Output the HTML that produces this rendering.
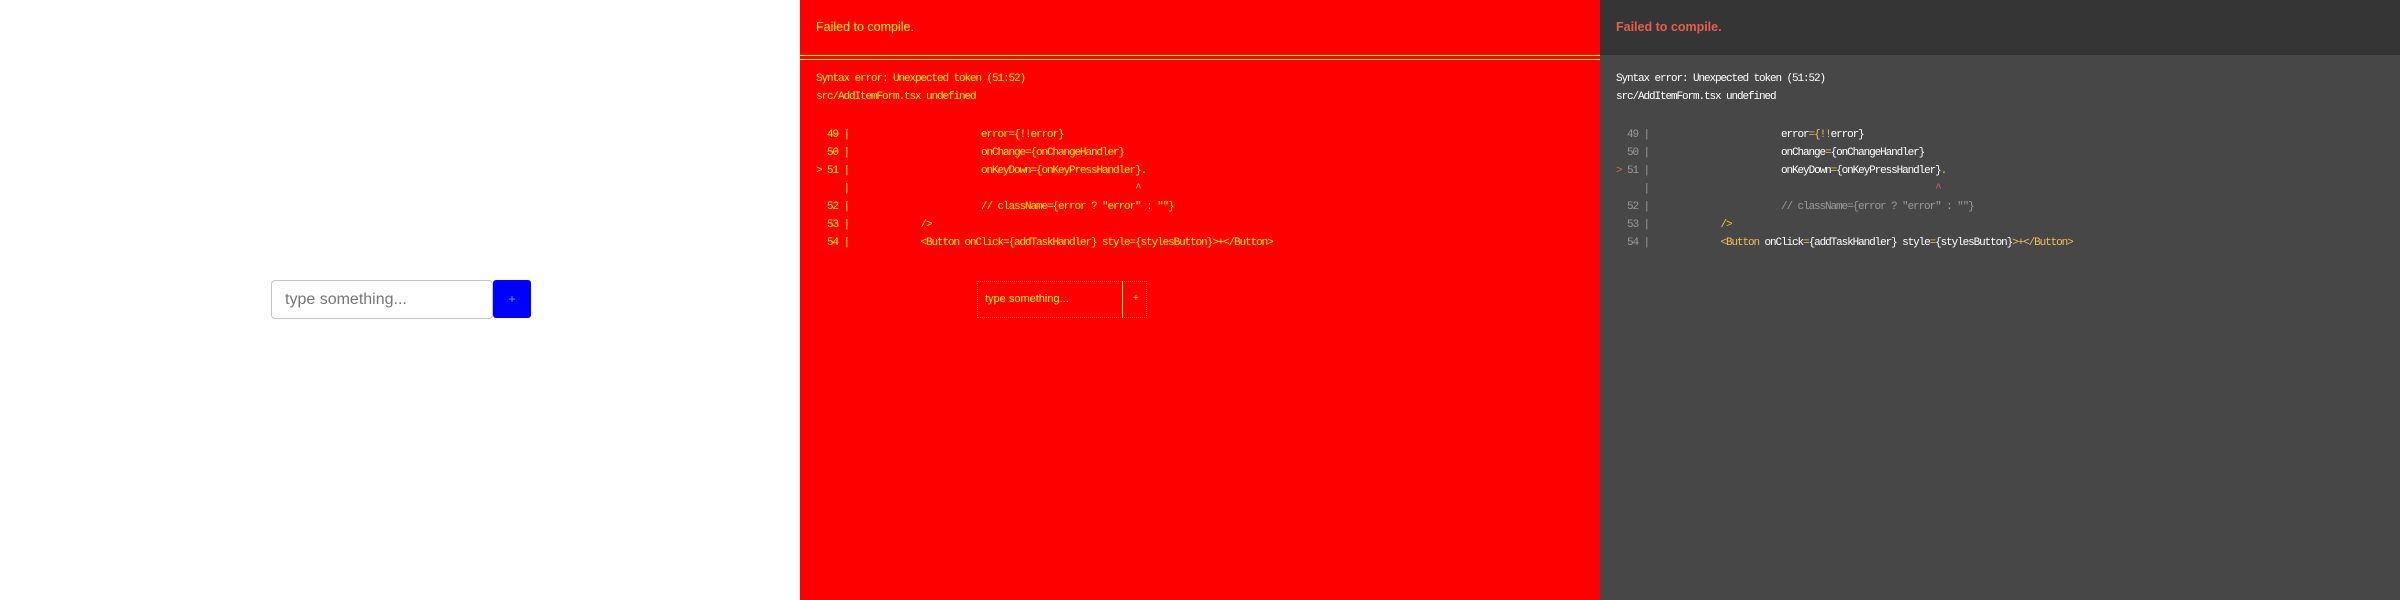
<!DOCTYPE html>
<html><head><meta charset="utf-8"><style>
*{margin:0;padding:0;box-sizing:border-box}
body{width:2400px;height:600px;overflow:hidden;position:relative;background:#fff;font-family:"Liberation Sans",sans-serif}
.p{position:absolute;top:0;width:800px;height:600px}
#l{left:0;background:#fff}
#r{left:800px;background:#ff0000}
#d{left:1600px;background:#474747}
.hd{position:absolute;left:0;top:0;width:800px;height:55px}
#d .hd{background:#353535}
.title{position:absolute;left:16px;top:20px;font-size:12.5px;font-weight:bold;font-family:"Liberation Sans Narrow","Liberation Sans",sans-serif}
.code{position:absolute;left:16px;font-family:"Liberation Mono",monospace;font-size:11px;letter-spacing:-1.1px;white-space:pre;line-height:18px}
.y{color:#f0c050}.g{color:#9a9a9a}.rd{color:#e36049}
#r .code,#r .title{color:#ffff00}
</style></head><body>
<div class="p" id="l">
  <div style="position:absolute;left:271px;top:280px;width:222px;height:39px;border:1px solid #c4c4c4;border-radius:4px;font-size:16px;color:#757575;padding:10px 0 0 13px">type something...</div>
  <div style="position:absolute;left:493px;top:280px;width:38px;height:38px;background:#0000ff;border-radius:3px;color:#7aa7ff;font-size:12px;text-align:center;line-height:38px">+</div>
</div>
<div class="p" id="r">
  <div class="title" style="font-weight:normal">Failed to compile.</div>
  <div style="position:absolute;left:0;top:55px;width:800px;height:1px;background:#ff0"></div>
  <div style="position:absolute;left:0;top:59px;width:800px;height:1px;background:#ff0"></div>
  <div class="code" style="top:70px">Syntax error: Unexpected token (51:52)
src/AddItemForm.tsx undefined</div>
  <div class="code" style="top:126px">  49 |                        error={!!error}
  50 |                        onChange={onChangeHandler}
> 51 |                        onKeyDown={onKeyPressHandler}.
     |                                                    ^
  52 |                        // className={error ? "error" : ""}
  53 |             />
  54 |             &lt;Button onClick={addTaskHandler} style={stylesButton}>+&lt;/Button></div>
  <div style="position:absolute;left:177px;top:281px;width:170px;height:37px;border:1px dotted rgba(255,255,0,.4)"></div>
  <div style="position:absolute;left:185px;top:293px;font-size:11px;color:#ff0">type something...</div>
  <div style="position:absolute;left:322px;top:281px;width:1px;height:37px;background:#ff0"></div>
  <div style="position:absolute;left:333px;top:293px;font-size:10px;color:#ff0">+</div>
</div>
<div class="p" id="d">
  <div class="hd"></div>
  <div class="title rd">Failed to compile.</div>
  <div class="code" style="top:70px;color:#fff">Syntax error: Unexpected token (51:52)
src/AddItemForm.tsx undefined</div>
  <div class="code" style="top:126px;color:#fff"><span class="g">  49 |</span>                        error<span class="y">={!!</span>error}
<span class="g">  50 |</span>                        onChange<span class="y">=</span>{onChangeHandler}
<span class="rd">&gt;</span><span class="g"> 51 |</span>                        onKeyDown<span class="y">=</span>{onKeyPressHandler}<span class="y">.</span>
<span class="g">     |</span>                                                    <span class="rd">^</span>
<span class="g">  52 |                        // className={error ? "error" : ""}</span>
<span class="g">  53 |</span>             <span class="y">/></span>
<span class="g">  54 |</span>             <span class="y">&lt;Button</span> onClick<span class="y">=</span>{addTaskHandler} style<span class="y">=</span>{stylesButton}<span class="y">>+&lt;/Button></span></div>
</div>
</body></html>
